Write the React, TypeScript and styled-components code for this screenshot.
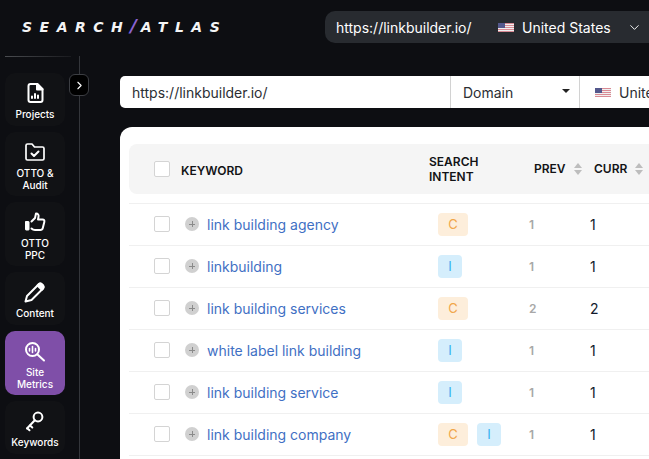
import styled, { createGlobalStyle } from "styled-components";
import { ChevronDown, ChevronRight } from "lucide-react";

const Global = createGlobalStyle`
  html, body { margin: 0; height: 100%; overflow: hidden; background: #0d0e12; }
  * { box-sizing: border-box; }
  body { font-family: Inter, "Liberation Sans", sans-serif; }
`;

const Page = styled.div`
  width: 649px;
  height: 459px;
  overflow: hidden;
  background: #0d0e12;
  display: flex;
  flex-direction: column;
`;

const Header = styled.header`
  height: 56px;
  flex-shrink: 0;
  display: flex;
  align-items: flex-start;
  padding: 11px 0 0 22px;
`;

const Logo = styled.div`
  width: 303px;
  flex-shrink: 0;
  margin-top: 6px;
  color: #f4f4f5;
  font: italic 700 14px/18px "DejaVu Sans", sans-serif;
  letter-spacing: 7.5px;
  white-space: nowrap;

  span {
    color: #8a63d2;
    font-size: 18px;
    letter-spacing: 4px;
  }
`;

const DomainPill = styled.div`
  width: 340px;
  height: 32px;
  flex-shrink: 0;
  display: flex;
  align-items: center;
  padding-left: 11px;
  border-radius: 10px;
  background: #282b30;
  color: #fff;
  font-size: 14px;
`;

const PillUrl = styled.span`
  width: 162px;
`;

const PillCountry = styled.span`
  margin-left: 8px;
  width: 105px;
`;

const Body = styled.div`
  flex: 1;
  display: flex;
  min-height: 0;
`;

const Sidebar = styled.nav`
  position: relative;
  width: 80px;
  flex-shrink: 0;
  padding: 17px 0 0 5px;
  border-right: 1px solid #34363b;
  display: flex;
  flex-direction: column;
  gap: 6px;

  &::before {
    content: "";
    position: absolute;
    top: 0;
    left: 5px;
    width: 66px;
    height: 1px;
    background: linear-gradient(90deg, #4a4c50, #1a1b1f);
  }
`;

const SideItem = styled.a<{ $active?: boolean; $tall?: boolean }>`
  width: 60px;
  height: ${({ $tall }) => ($tall ? "64px" : "53px")};
  flex-shrink: 0;
  display: flex;
  flex-direction: column;
  align-items: center;
  padding-top: 9px;
  border-radius: 10px;
  background: ${({ $active }) => ($active ? "#7f4fa8" : "#111215")};
  color: #fff;
  font-size: 10px;
  font-weight: 500;
  line-height: 11.5px;
  text-align: center;

  svg {
    margin-bottom: 5px;
    flex-shrink: 0;
  }
`;

const Collapse = styled.button`
  position: absolute;
  top: 18px;
  left: 69px;
  width: 20px;
  height: 22px;
  padding: 0;
  display: flex;
  align-items: center;
  justify-content: center;
  border: 1px solid #3c3e43;
  border-radius: 6px;
  background: #000;
  color: #fff;
`;

const Main = styled.main`
  flex: 1;
  min-width: 0;
  padding: 20px 0 0 40px;
`;

const SearchBar = styled.div`
  display: flex;
  height: 32px;
  width: 560px;
  background: #fff;
  border-radius: 5px;
  color: #2b2e33;
  font-size: 14px;
`;

const UrlField = styled.div`
  width: 330px;
  display: flex;
  align-items: center;
  padding-left: 12px;
`;

const TypeField = styled.div`
  width: 130px;
  display: flex;
  align-items: center;
  justify-content: space-between;
  padding: 0 9px 0 12px;
  border-left: 1px solid #d2d2d2;
  border-right: 1px solid #d2d2d2;

  &::after {
    content: "";
    margin-top: -3px;
    border-left: 4px solid transparent;
    border-right: 4px solid transparent;
    border-top: 4.5px solid #222;
  }
`;

const CountryField = styled.div`
  width: 100px;
  display: flex;
  align-items: center;
  gap: 8px;
  padding-left: 15px;
  white-space: nowrap;
`;

const Card = styled.section`
  width: 560px;
  height: 400px;
  margin-top: 19px;
  padding: 17px 0 0 9px;
  background: #fff;
  border-radius: 12px;
`;

const HeadRow = styled.div`
  display: grid;
  grid-template-columns: 27px 248px 105px 60px 1fr;
  align-items: center;
  height: 50px;
  padding: 3px 0 0 25px;
  background: #f5f5f5;
  border-radius: 8px;
  color: #121316;
  font-size: 12px;
  font-weight: 600;
  line-height: 15px;
`;

const HeadCheck = styled.span`
  width: 16px;
  height: 16px;
  margin-top: -3px;
  background: #fff;
  border: 1px solid #d4d4d4;
  border-radius: 2px;
`;

const IntentLabel = styled.span`
  margin-top: -4px;
`;

const SortLabel = styled.div`
  display: flex;
  align-items: center;
  gap: 8px;
  margin-top: -4px;
`;

const SortArrows = styled.span`
  display: flex;
  flex-direction: column;
  gap: 2px;

  &::before,
  &::after {
    content: "";
    border-left: 4px solid transparent;
    border-right: 4px solid transparent;
  }
  &::before { border-bottom: 5px solid #bdbdbd; }
  &::after { border-top: 5px solid #bdbdbd; }
`;

const Rows = styled.div`
  margin-top: 9px;
  border-top: 1px solid #f0f0f0;
`;

const Row = styled.div`
  display: grid;
  grid-template-columns: 31px 253px 91px 61px 1fr;
  align-items: center;
  height: 42px;
  padding: 0 0 1px 25px;
  border-bottom: 1px solid #f0f0f0;
`;

const Check = styled.span`
  width: 16px;
  height: 16px;
  background: #fff;
  border: 1px solid #d4d4d4;
  border-radius: 2px;
`;

const KeywordCell = styled.div`
  display: flex;
  align-items: center;
  gap: 8px;
  color: #3f70c4;
  font-size: 14px;
`;

const PlusDot = styled.span`
  position: relative;
  width: 14px;
  height: 14px;
  border-radius: 50%;
  background: #d0d0d0;

  &::before,
  &::after {
    content: "";
    position: absolute;
    background: #8a8a8a;
  }
  &::before { left: 4px; top: 6.5px; width: 6px; height: 1px; }
  &::after { left: 6.5px; top: 4px; width: 1px; height: 6px; }
`;

const Badges = styled.div`
  display: flex;
  gap: 9px;
`;

const Badge = styled.span<{ $kind: "C" | "I" }>`
  height: 23px;
  width: ${({ $kind }) => ($kind === "C" ? "30px" : "24px")};
  display: flex;
  align-items: center;
  justify-content: center;
  border-radius: 4px;
  font-size: 13px;
  background: ${({ $kind }) => ($kind === "C" ? "#fdeedb" : "#d5eefc")};
  color: ${({ $kind }) => ($kind === "C" ? "#f1a64a" : "#35aef0")};
`;

const Prev = styled.span`
  color: #a8a8a8;
  font-size: 12px;
  font-weight: 600;
`;

const Curr = styled.span`
  color: #121a2c;
  font-size: 14px;
`;

function Flag() {
  return (
    <svg width="16" height="9" viewBox="0 0 16 9" style={{ flexShrink: 0 }}>
      <rect width="16" height="9" fill="#f0f0f0" />
      {[0, 2, 4, 6, 8].map((y) => (
        <rect key={y} y={y} width="16" height="1" fill="#d98a94" />
      ))}
      <rect width="7" height="5" fill="#54588c" />
    </svg>
  );
}

function NavIcon({ children }: { children: React.ReactNode }) {
  return (
    <svg width="22" height="22" viewBox="0 0 22 22" fill="none" stroke="#fff" strokeWidth="2" strokeLinecap="round" strokeLinejoin="round">
      {children}
    </svg>
  );
}

const ProjectsIcon = () => (
  <NavIcon>
    <path d="M6.5 2h7l5 5v11a2 2 0 0 1-2 2h-10a2 2 0 0 1-2-2V4a2 2 0 0 1 2-2z" />
    <path d="M13 2v5.5h5.5" fill="#fff" />
    <path d="M8 16v-1.5M11 16v-4M14 16v-2.5" />
  </NavIcon>
);

const FolderIcon = () => (
  <NavIcon>
    <path d="M2 17.5V4.5A1.5 1.5 0 0 1 3.5 3H8l2.5 3H18.5A1.5 1.5 0 0 1 20 7.5v10A1.5 1.5 0 0 1 18.5 19h-15A1.5 1.5 0 0 1 2 17.5z" strokeWidth="1.7" />
    <path d="M7.5 12.5l2.5 2.5 4.5-4.5" />
  </NavIcon>
);

const ThumbIcon = () => (
  <NavIcon>
    <rect x="1.5" y="10.5" width="3.5" height="8.5" rx="0.5" fill="#fff" strokeWidth="1" />
    <path d="M7.5 10.5 11 7l1-4.5c2 0 3 1.5 2.5 3.5l-.5 2.5h4.5c1.5 0 2.2 1 1.8 2.5l-1.5 6c-.3 1.2-1 2-2.500 2H11c-1.5 0-2.5-.5-3.500-1.500" />
  </NavIcon>
);

const PencilIcon = () => (
  <NavIcon>
    <path d="M1.5 20.5 3 15 14.500 3.500c1-1 2.500-1 3.500 0l.8.8c1 1 1 2.500 0 3.500L7.500 19z" />
    <path d="M14.500 3.500c1-1 2.500-1 3.500 0l.8.8c1 1 1 2.500 0 3.500l-1 1-4.300-4.300z" fill="#fff" />
  </NavIcon>
);

const MetricsIcon = () => (
  <NavIcon>
    <circle cx="8.5" cy="9.5" r="6.5" />
    <path d="M13.500 14.500 20 20.500" />
    <path d="M5.500 8.500v2.500M8.500 6.500v6M11.500 8.500v2.500" strokeWidth="1.6" />
  </NavIcon>
);

const KeyIcon = () => (
  <NavIcon>
    <circle cx="14" cy="7" r="4.4" />
    <path d="M10.800 10.200 3 18.500" />
    <path d="M3.200 18.300l2.300 2M6 15.500l2.300 2" />
  </NavIcon>
);

const keywords: { name: string; intents: ("C" | "I")[]; prev: number; curr: number }[] = [
  { name: "link building agency", intents: ["C"], prev: 1, curr: 1 },
  { name: "linkbuilding", intents: ["I"], prev: 1, curr: 1 },
  { name: "link building services", intents: ["C"], prev: 2, curr: 2 },
  { name: "white label link building", intents: ["I"], prev: 1, curr: 1 },
  { name: "link building service", intents: ["I"], prev: 1, curr: 1 },
  { name: "link building company", intents: ["C", "I"], prev: 1, curr: 1 },
];

export default function App() {
  return (
    <Page>
      <Global />
      <Header>
        <Logo>SEARCH<span>/</span>ATLAS</Logo>
        <DomainPill>
          <PillUrl>https://linkbuilder.io/</PillUrl>
          <Flag />
          <PillCountry>United States</PillCountry>
          <ChevronDown size={15} strokeWidth={1.5} />
        </DomainPill>
      </Header>
      <Body>
        <Sidebar>
          <Collapse><ChevronRight size={13} strokeWidth={2} /></Collapse>
          <SideItem><ProjectsIcon />Projects</SideItem>
          <SideItem $tall><FolderIcon />OTTO &amp;<br />Audit</SideItem>
          <SideItem $tall><ThumbIcon />OTTO<br />PPC</SideItem>
          <SideItem><PencilIcon />Content</SideItem>
          <SideItem $active $tall><MetricsIcon />Site<br />Metrics</SideItem>
          <SideItem><KeyIcon />Keywords</SideItem>
        </Sidebar>
        <Main>
          <SearchBar>
            <UrlField>https://linkbuilder.io/</UrlField>
            <TypeField>Domain</TypeField>
            <CountryField><Flag />United States</CountryField>
          </SearchBar>
          <Card>
            <HeadRow>
              <HeadCheck />
              <span>KEYWORD</span>
              <IntentLabel>SEARCH<br />INTENT</IntentLabel>
              <SortLabel>PREV<SortArrows /></SortLabel>
              <SortLabel>CURR<SortArrows /></SortLabel>
            </HeadRow>
            <Rows>
              {keywords.map((k) => (
                <Row key={k.name}>
                  <Check />
                  <KeywordCell><PlusDot />{k.name}</KeywordCell>
                  <Badges>
                    {k.intents.map((i) => (
                      <Badge key={i} $kind={i}>{i}</Badge>
                    ))}
                  </Badges>
                  <Prev>{k.prev}</Prev>
                  <Curr>{k.curr}</Curr>
                </Row>
              ))}
            </Rows>
          </Card>
        </Main>
      </Body>
    </Page>
  );
}
